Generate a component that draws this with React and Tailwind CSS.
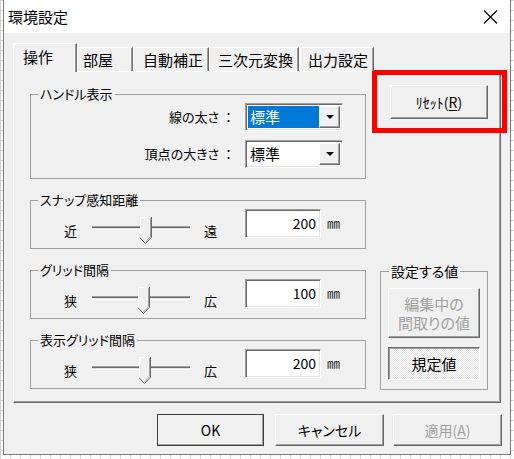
import React from 'react';

const raised =
  'border border-t-white border-l-white border-r-[#696969] border-b-[#696969] shadow-[inset_-1px_-1px_0_#a0a0a0]';
const sunken =
  'border border-t-[#a0a0a0] border-l-[#a0a0a0] border-r-white border-b-white shadow-[inset_1px_1px_0_#696969,inset_-1px_-1px_0_#e3e3e3]';
const noPalt = '[font-feature-settings:normal]';

const tabs = [
  { name: '操作', w: 'w-[64px]', pl: 'pl-[9px]', active: true },
  { name: '部屋', w: 'w-[56px]', pl: 'pl-[5px]' },
  { name: '自動補正', w: 'w-[76px]', pl: 'pl-[9px]' },
  { name: '三次元変換', w: 'w-[90px]', pl: 'pl-[8px]' },
  { name: '出力設定', w: 'w-[75px]', pl: 'pl-[8px]' },
];

const Select = ({ selected }) => (
  <div className={`w-[98px] h-[28px] ${sunken} bg-white flex p-[2px]`}>
    <div
      className={`flex-1 pl-[2px] text-[15px] leading-[22px] ${
        selected ? 'bg-[#0078d7] text-white' : 'text-black'
      }`}
    >
      標準
    </div>
    <div className={`w-[21px] ${raised} bg-[#f0f0f0] flex items-center justify-center`}>
      <svg width="8" height="4" viewBox="0 0 8 4">
        <polygon points="0,0 8,0 4,4" fill="#000" />
      </svg>
    </div>
  </div>
);

const Slider = ({ pos }) => (
  <svg width="100" height="27" viewBox="0 0 100 27" className="block shrink-0 mt-[8px] ml-[15px]">
    <rect x="0" y="9" width="98" height="1" fill="#a0a0a0" />
    <rect x="0" y="10" width="98" height="1" fill="#696969" />
    <rect x="0" y="11" width="98" height="1" fill="#e3e3e3" />
    <rect x="0" y="12" width="98" height="1" fill="#ffffff" />
    <g transform={`translate(${pos},0)`}>
      <polygon points="0,0 11,0 11,20 5.5,26 0,20" fill="#f0f0f0" />
      <polyline points="0.5,20 0.5,0.5 10.5,0.5" stroke="#ffffff" fill="none" />
      <polyline points="11.5,0 11.5,20.2 5.5,26.5 0,20.8" stroke="#696969" fill="none" />
      <polyline points="10.5,1 10.5,19.8 5.5,25" stroke="#a0a0a0" fill="none" />
    </g>
  </svg>
);

const Legend = ({ children }) => (
  <legend className="ml-[7px] px-[2px] text-[13px] leading-[16px]">{children}</legend>
);

const SliderGroup = ({ title, low, high, value, pos }) => (
  <fieldset className="border border-[#a0a0a0] pb-[10px]">
    <Legend>{title}</Legend>
    <div className="flex items-start h-[29px] mt-[1px]">
      <span className="ml-[33px] mt-[14px] w-[13px] text-[13px] leading-[16px]">{low}</span>
      <Slider pos={pos} />
      <span className="ml-[12px] mt-[14px] w-[13px] text-[13px] leading-[16px]">{high}</span>
      <div
        className={`ml-[28px] w-[76px] h-[29px] ${sunken} bg-white text-right pr-[4px] text-[14px] leading-[27px]`}
      >
        {value}
      </div>
      <span className="ml-[6px] mt-[6px] text-[13px] leading-[16px] text-[#1a1a1a]">㎜</span>
    </div>
  </fieldset>
);

const Button = ({ children, className = '', disabled, isDefault }) => (
  <div
    className={`${raised} bg-[#f0f0f0] flex items-center justify-center ${
      disabled ? 'text-[#a0a0a0]' : 'text-black'
    } ${isDefault ? 'outline outline-1 outline-[#404040] -outline-offset-1' : ''} ${className}`}
  >
    {children}
  </div>
);

export default function App() {
  return (
    <div className="relative w-[514px] h-[459px] overflow-hidden bg-[#fbfbfb] bg-[linear-gradient(90deg,#d4d4d4_1px,transparent_1px),linear-gradient(#d4d4d4_1px,transparent_1px)] bg-[length:10px_10px] font-['Noto_Sans_CJK_JP',sans-serif] [font-feature-settings:'palt'] text-black">
      <div className="ml-[3px] w-[508px] h-[455px] border-x border-b border-[#7a7a7a] bg-[#f0f0f0] flex flex-col">
        {/* Title bar */}
        <div className="h-[33px] bg-white flex items-center pl-[4px] pr-[12px]">
          <span className="text-[15px] leading-[20px]">環境設定</span>
          <svg width="15" height="14" viewBox="0 0 15 14" className="ml-auto">
            <path d="M1 0.5 L14 13.5 M14 0.5 L1 13.5" stroke="#000" strokeWidth="1.1" />
          </svg>
        </div>

        {/* Tabs */}
        <div className="relative z-10 flex items-end h-[29px] ml-[9px] mt-[10px] -mb-px">
          {tabs.map((t) =>
            t.active ? (
              <div
                key={t.name}
                className={`${t.w} ${t.pl} h-[29px] pt-[3px] border-t border-l border-r border-t-white border-l-white border-r-[#696969] shadow-[inset_-1px_0_0_#a0a0a0] rounded-tl-[2px] bg-[#f0f0f0] text-[15px] leading-[20px]`}
              >
                {t.name}
              </div>
            ) : (
              <div
                key={t.name}
                className={`${t.w} ${t.pl} h-[24px] mb-[1px] flex items-center border-t border-l border-r border-t-white border-l-white border-r-[#696969] shadow-[inset_-1px_0_0_#a0a0a0] bg-[#f0f0f0] text-[15px] leading-[20px]`}
              >
                {t.name}
              </div>
            )
          )}
        </div>

        {/* Panel */}
        <div className="ml-[9px] w-[488px] h-[332px] border border-t-white border-l-white border-r-[#696969] border-b-[#696969] shadow-[inset_-1px_-1px_0_#a0a0a0] flex items-start pt-[14px] pl-[16px]">
          <div className="w-[336px] flex flex-col gap-[13px]">
            <fieldset className="border border-[#a0a0a0] pb-[10px]">
              <Legend>ハンドル表示</Legend>
              <div className="flex flex-col items-end gap-[9px] pt-[1px] pr-[22px]">
                <div className="flex items-center">
                  <span className="text-[13px] leading-[16px] mr-[10px]">
                    線の太さ <span className={noPalt}>：</span>
                  </span>
                  <Select selected />
                </div>
                <div className="flex items-center">
                  <span className="text-[13px] leading-[16px] mr-[10px]">
                    頂点の大きさ <span className={noPalt}>：</span>
                  </span>
                  <Select />
                </div>
              </div>
            </fieldset>
            <SliderGroup title="スナップ感知距離" low="近" high="遠" value="200" pos={48} />
            <SliderGroup title="グリッド間隔" low="狭" high="広" value="100" pos={46} />
            <SliderGroup title="表示グリッド間隔" low="狭" high="広" value="200" pos={47} />
          </div>

          <div className="ml-[14px] w-[108px] self-stretch flex flex-col pb-[12px]">
            <Button className={`ml-[10px] -mt-px w-[98px] h-[34px] text-[14px] leading-[18px] ${noPalt}`}>
              ﾘｾｯﾄ(<span className="underline underline-offset-2">R</span>)
            </Button>
            <fieldset className="mt-auto border border-[#a0a0a0] pb-[9px]">
              <legend className="ml-[8px] px-[2px] text-[14px] leading-[16px]">設定する値</legend>
              <div className="flex flex-col gap-[9px] pt-[9px] pl-[7px]">
                <Button disabled className="w-[92px] h-[50px] flex-col text-[15px] leading-[19px]">
                  <span>編集中の</span>
                  <span>間取りの値</span>
                </Button>
                <div className="w-[92px] h-[33px] border border-t-[#696969] border-l-[#696969] border-r-white border-b-white shadow-[inset_1px_1px_0_#a0a0a0] bg-[repeating-conic-gradient(#e6e6e6_0_25%,#fbfbfb_0_50%)] bg-[length:2px_2px] flex items-center justify-center text-[15px] leading-[20px]">
                  規定値
                </div>
              </div>
            </fieldset>
          </div>
        </div>

        {/* Bottom buttons */}
        <div className="flex justify-end pr-[8px] mt-[11px]">
          <Button isDefault className="w-[107px] h-[32px] text-[14px] leading-[20px]">
            OK
          </Button>
          <Button className="ml-[11px] w-[109px] h-[32px] text-[14px] leading-[20px]">
            キャンセル
          </Button>
          <Button disabled className="ml-[9px] w-[109px] h-[32px] text-[14px] leading-[20px]">
            適用(<span className="underline underline-offset-2">A</span>)
          </Button>
        </div>
      </div>

      {/* Red highlight annotation */}
      <div className="absolute left-[372px] top-[70px] w-[135px] h-[63px] border-[5px] border-[#ff0000]" />
    </div>
  );
}
